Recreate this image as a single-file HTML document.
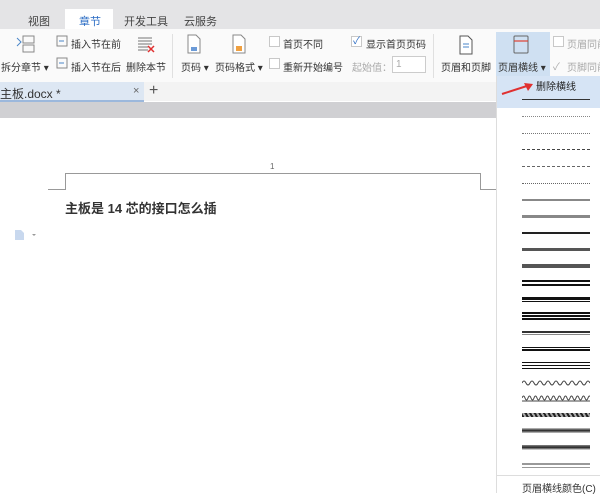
<!DOCTYPE html><html><head><meta charset="utf-8"><style>
*{margin:0;padding:0;box-sizing:border-box}
body{width:600px;height:493px;overflow:hidden;position:relative;background:#fff;font-family:"Liberation Sans","Noto Sans CJK SC",sans-serif;font-size:10px;color:#333}
.a{position:absolute;white-space:nowrap}
.cb{position:absolute;width:11px;height:11px;border:1px solid #c8c8c8;background:#fff}
.ln{position:absolute;left:522px;width:68px}
</style></head><body>
<div class="a" style="left:0;top:0;width:600px;height:29px;background:#e4e4e6"></div>
<div class="a" style="left:65px;top:9px;width:48px;height:20px;background:#fff"></div>
<div class="a" style="left:28px;top:13px;color:#444;font-size:11px">视图</div>
<div class="a" style="left:79px;top:13px;color:#2b6cc4;font-size:11px">章节</div>
<div class="a" style="left:124px;top:13px;color:#444;font-size:11px">开发工具</div>
<div class="a" style="left:184px;top:13px;color:#444;font-size:11px">云服务</div>
<div class="a" style="left:0;top:29px;width:600px;height:54px;background:#fafafa"></div>
<svg class="a" style="left:14px;top:34px" width="22" height="20"><path d="M3 4l4 4-4 4" stroke="#4a86c8" fill="none"/><rect x="9" y="2" width="11" height="7" fill="none" stroke="#888"/><rect x="9" y="11" width="11" height="7" fill="none" stroke="#888"/></svg>
<div class="a" style="left:1px;top:59px">拆分章节 ▾</div>
<svg class="a" style="left:56px;top:35px" width="12" height="12"><rect x="1" y="1" width="10" height="10" fill="none" stroke="#888"/><path d="M3 6h5" stroke="#4a86c8"/></svg>
<div class="a" style="left:71px;top:36px">插入节在前</div>
<svg class="a" style="left:56px;top:57px" width="12" height="12"><rect x="1" y="1" width="10" height="10" fill="none" stroke="#888"/><path d="M3 6h5" stroke="#4a86c8"/></svg>
<div class="a" style="left:71px;top:59px">插入节在后</div>
<svg class="a" style="left:136px;top:35px" width="20" height="18"><path d="M2 3h14M2 6h14M2 9h14M2 12h10M2 15h10" stroke="#777"/><path d="M12 11l6 6M18 11l-6 6" stroke="#e03030" stroke-width="1.5"/></svg>
<div class="a" style="left:126px;top:59px">删除本节</div>
<div class="a" style="left:172px;top:34px;width:1px;height:44px;background:#e0e0e0"></div>
<svg class="a" style="left:186px;top:34px" width="16" height="20"><path d="M2 1h8l4 4v14H2z" fill="#fff" stroke="#888"/><rect x="5" y="13" width="6" height="4" fill="#6c9bd8"/></svg>
<div class="a" style="left:181px;top:59px">页码 ▾</div>
<svg class="a" style="left:231px;top:34px" width="16" height="20"><path d="M2 1h8l4 4v14H2z" fill="#fff" stroke="#888"/><rect x="5" y="12" width="6" height="5" fill="#f0a040"/></svg>
<div class="a" style="left:215px;top:59px">页码格式 ▾</div>
<div class="cb" style="left:269px;top:36px"></div><div class="a" style="left:283px;top:36px">首页不同</div>
<div class="cb" style="left:269px;top:58px"></div><div class="a" style="left:283px;top:59px">重新开始编号</div>
<div class="cb" style="left:351px;top:36px;color:#2b6cc4;font-size:10px;line-height:9px;text-align:center">✓</div><div class="a" style="left:366px;top:36px">显示首页页码</div>
<div class="a" style="left:352px;top:59px;color:#aaa">起始值：</div>
<div class="a" style="left:392px;top:56px;width:34px;height:17px;border:1px solid #ccc;background:#fff;color:#aaa;padding-left:3px;line-height:15px">1</div>
<div class="a" style="left:433px;top:34px;width:1px;height:44px;background:#e0e0e0"></div>
<svg class="a" style="left:458px;top:35px" width="16" height="20"><path d="M2 1h8l4 4v14H2z" fill="#fff" stroke="#555"/><path d="M5 9h6M5 12h6" stroke="#4a86c8"/></svg>
<div class="a" style="left:441px;top:59px">页眉和页脚</div>
<div class="a" style="left:496px;top:32px;width:54px;height:48px;background:#cfe0f2"></div>
<svg class="a" style="left:513px;top:35px" width="18" height="20"><rect x="1" y="1" width="14" height="17" rx="1" fill="none" stroke="#666"/><path d="M1 6h14" stroke="#e04030" stroke-width="1.2"/></svg>
<div class="a" style="left:498px;top:59px">页眉横线 ▾</div>
<div class="cb" style="left:553px;top:36px"></div><div class="a" style="left:567px;top:36px;color:#aaa">页眉同前</div>
<div class="a" style="left:553px;top:58px;color:#aaa">✓</div><div class="a" style="left:567px;top:59px;color:#aaa">页脚同前</div>
<div class="a" style="left:0;top:82px;width:600px;height:19px;background:#f3f3f3"></div>
<div class="a" style="left:0;top:82px;width:144px;height:20px;background:#dde7f3;border-bottom:2px solid #9cb8dc"></div>
<div class="a" style="left:0;top:85px;font-size:12px">主板.docx *</div>
<div class="a" style="left:133px;top:85px;color:#666;font-size:11px">×</div>
<div class="a" style="left:149px;top:82px;font-size:16px;color:#555">+</div>
<div class="a" style="left:0;top:102px;width:600px;height:16px;background:#d0d0d3"></div>
<div class="a" style="left:0;top:118px;width:600px;height:375px;background:#fff"></div>
<div class="a" style="left:65px;top:173px;width:416px;height:1px;background:#999"></div>
<div class="a" style="left:65px;top:173px;width:1px;height:16px;background:#999"></div>
<div class="a" style="left:48px;top:189px;width:18px;height:1px;background:#999"></div>
<div class="a" style="left:480px;top:173px;width:1px;height:16px;background:#999"></div>
<div class="a" style="left:480px;top:189px;width:18px;height:1px;background:#999"></div>
<div class="a" style="left:270px;top:162px;font-size:8px;color:#666">1</div>
<div class="a" style="left:65px;top:198px;font-size:13px;font-weight:bold;color:#333">主板是 14 芯的接口怎么插</div>
<svg class="a" style="left:14px;top:229px" width="22" height="12"><path d="M1 1h6l3 3v7H1z" fill="#c8d8ee"/><path d="M18 5l2 2 2-2" fill="#999"/></svg>
<div class="a" style="left:496px;top:76px;width:104px;height:417px;background:#fff;border-left:1px solid #ddd"></div>
<div class="a" style="left:497px;top:76px;width:103px;height:32px;background:#d6e4f5"></div>
<div class="a" style="left:536px;top:78px;font-size:10px;color:#222">删除横线</div>
<svg class="a" style="left:500px;top:82px" width="36" height="14"><path d="M2 12L30 3" stroke="#e03030" stroke-width="2"/><path d="M24 1l9 1-5 7z" fill="#e03030"/></svg>
<div class="ln" style="top:99px;border-top:1px solid #333"></div>
<div class="ln" style="top:116px;border-top:1px dotted #888"></div>
<div class="ln" style="top:133px;border-top:1px dotted #777"></div>
<div class="ln" style="top:149px;border-top:1px dashed #444"></div>
<div class="ln" style="top:166px;border-top:1px dashed #666"></div>
<div class="ln" style="top:183px;border-top:1px dotted #666"></div>
<div class="ln" style="top:199px;height:2px;background:#888"></div>
<div class="ln" style="top:215px;height:3px;background:#888"></div>
<div class="ln" style="top:232px;height:2px;background:#222"></div>
<div class="ln" style="top:248px;height:3px;background:#555"></div>
<div class="ln" style="top:264px;height:4px;background:#555"></div>
<div class="ln" style="top:280px;height:6px;border-top:2px solid #111;border-bottom:2px solid #111"></div>
<div class="ln" style="top:297px;height:5px;border-top:3px solid #111;border-bottom:1px solid #111"></div>
<div class="ln" style="top:312px;height:8px;border-top:2px solid #111;border-bottom:2px solid #111;background:linear-gradient(#fff 1px,#111 1px,#111 3px,#fff 3px)"></div>
<div class="ln" style="top:331px;height:4px;border-top:2px solid #333;border-bottom:1px solid #888"></div>
<div class="ln" style="top:347px;height:4px;border-top:1px solid #111;border-bottom:2px solid #111"></div>
<div class="ln" style="top:362px;height:7px;border-top:1px solid #111;border-bottom:1px solid #111;background:linear-gradient(#fff 2px,#111 2px,#111 3px,#fff 3px)"></div>
<svg class="a" style="left:522px;top:378px" width="68" height="8"><path d="M0 5 Q2 1 4 5 T8 5 T12 5 T16 5 T20 5 T24 5 T28 5 T32 5 T36 5 T40 5 T44 5 T48 5 T52 5 T56 5 T60 5 T64 5 T68 5" fill="none" stroke="#444"/></svg>
<svg class="a" style="left:522px;top:394px" width="68" height="9"><path d="M0 4 Q1.5 0 3 4 T6 4 T9 4 T12 4 T15 4 T18 4 T21 4 T24 4 T27 4 T30 4 T33 4 T36 4 T39 4 T42 4 T45 4 T48 4 T51 4 T54 4 T57 4 T60 4 T63 4 T66 4 T69 4" fill="none" stroke="#444"/><path d="M0 7h68" stroke="#444"/></svg>
<div class="ln" style="top:413px;height:4px;background:repeating-linear-gradient(60deg,#222 0 2px,#aaa 2px 4px)"></div>
<div class="ln" style="top:428px;height:5px;background:linear-gradient(#ccc,#222,#ccc)"></div>
<div class="ln" style="top:445px;height:5px;background:linear-gradient(#888,#222,#eee)"></div>
<div class="ln" style="top:463px;height:5px;border-top:2px solid #999;border-bottom:1px solid #999"></div>
<div class="a" style="left:497px;top:475px;width:103px;height:1px;background:#ddd"></div>
<div class="a" style="left:522px;top:480px;font-size:10px;color:#333">页眉横线颜色(C)</div>
</body></html>
